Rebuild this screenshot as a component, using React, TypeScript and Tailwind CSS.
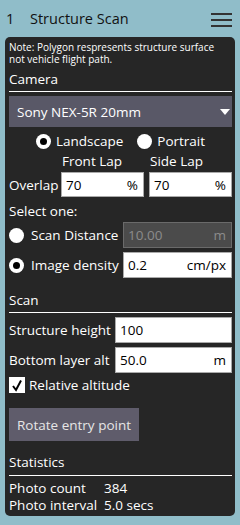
import React from 'react';

const Radio = ({ checked }: { checked: boolean }) => (
  <span className="w-[15px] h-[15px] rounded-full bg-white flex items-center justify-center shrink-0">
    {checked && <span className="w-[7px] h-[7px] rounded-full bg-black" />}
  </span>
);

const Field = ({ value, unit, disabled, h = 'h-[26px]' }: { value: string; unit?: string; disabled?: boolean; h?: string }) => (
  <div
    className={
      (disabled
        ? 'bg-[#4b4b4b] border border-[#6a6a6a] text-[#8c8c8c] '
        : 'bg-white border border-[#aaa] text-black ') +
      'flex-1 flex items-center justify-between pl-[4px] pr-[5px] ' +
      h
    }
  >
    <span>{value}</span>
    {unit && <span>{unit}</span>}
  </div>
);

export default function App() {
  return (
    <div className="w-[240px] h-[525px] bg-[#90bdc9] flex flex-col font-['Open_Sans',sans-serif] text-[13.5px] leading-[16px]">
      <div className="h-[37px] flex items-center pl-[6px] pr-[8px] text-[#111]">
        <span className="text-[14.5px] w-[24px]">1</span>
        <span className="text-[14.5px] flex-1">Structure Scan</span>
        <svg width="21" height="16" viewBox="0 0 21 16">
          <rect x="0" y="2" width="21" height="2" fill="#333" />
          <rect x="0" y="8" width="21" height="2" fill="#333" />
          <rect x="0" y="14" width="21" height="2" fill="#333" />
        </svg>
      </div>
      <div className="mx-[5px] h-[479px] rounded-[5px] bg-[#262626] text-white pl-[4px] pr-[3px] pt-[4px] flex flex-col">
        <div className="text-[10px] leading-[12px]">
          Note: Polygon respresents structure surface not vehicle flight path.
        </div>

        <div className="mt-[6px]">Camera</div>
        <div className="h-px bg-white mt-[4px]" />
        <div className="mt-[4px] h-[31px] bg-[#595867] flex items-center justify-between pl-[8px] pr-[2px]">
          <span>Sony NEX-5R 20mm</span>
          <svg width="10" height="6" viewBox="0 0 10 6">
            <path d="M0 0 L10 0 L5 6 Z" fill="#fff" />
          </svg>
        </div>

        <div className="flex items-center justify-center mt-[6px] h-[16px]">
          <Radio checked />
          <span className="ml-[5px] mr-[14px]">Landscape</span>
          <Radio checked={false} />
          <span className="ml-[5px]">Portrait</span>
        </div>
        <div className="flex mt-[4px]">
          <span className="w-[53px]" />
          <span className="w-[88px]">Front Lap</span>
          <span>Side Lap</span>
        </div>
        <div className="flex items-center mt-[3px]">
          <span className="w-[52px]">Overlap</span>
          <div className="flex flex-1 gap-[5px]">
            <Field value="70" unit="%" h="h-[25px]" />
            <Field value="70" unit="%" h="h-[25px]" />
          </div>
        </div>

        <div className="mt-[6px]">Select one:</div>
        <div className="flex items-center mt-[3px]">
          <Radio checked={false} />
          <span className="flex-1 ml-[7px]">Scan Distance</span>
          <div className="w-[109px] flex">
            <Field value="10.00" unit="m" disabled />
          </div>
        </div>
        <div className="flex items-center mt-[4px]">
          <Radio checked />
          <span className="flex-1 ml-[7px]">Image density</span>
          <div className="w-[109px] flex">
            <Field value="0.2" unit="cm/px" />
          </div>
        </div>

        <div className="mt-[14px]">Scan</div>
        <div className="h-px bg-white mt-[4px]" />
        <div className="flex items-center mt-[4px]">
          <span className="flex-1">Structure height</span>
          <div className="w-[117px] flex">
            <Field value="100" />
          </div>
        </div>
        <div className="flex items-center mt-[4px]">
          <span className="flex-1">Bottom layer alt</span>
          <div className="w-[117px] flex">
            <Field value="50.0" unit="m" />
          </div>
        </div>
        <div className="flex items-center mt-[4px] h-[16px]">
          <span className="w-[16px] h-[16px] bg-white flex items-center justify-center shrink-0">
            <svg width="12" height="13" viewBox="0 0 12 13">
              <path d="M2 7 L5 11 L10 1.5" stroke="#000" strokeWidth="2" fill="none" />
            </svg>
          </span>
          <span className="ml-[4px]">Relative altitude</span>
        </div>

        <div className="mt-[15px] flex">
          <div className="h-[33px] flex items-center px-[8px] bg-[#5f5c6b] text-[#e6e6e6]">
            Rotate entry point
          </div>
        </div>

        <div className="mt-[13px]">Statistics</div>
        <div className="h-px bg-white mt-[5px]" />
        <div className="flex mt-[4px] leading-[17px]">
          <span className="w-[95px]">Photo count</span>
          <span>384</span>
        </div>
        <div className="flex leading-[17px]">
          <span className="w-[95px]">Photo interval</span>
          <span>5.0 secs</span>
        </div>
      </div>
    </div>
  );
}
